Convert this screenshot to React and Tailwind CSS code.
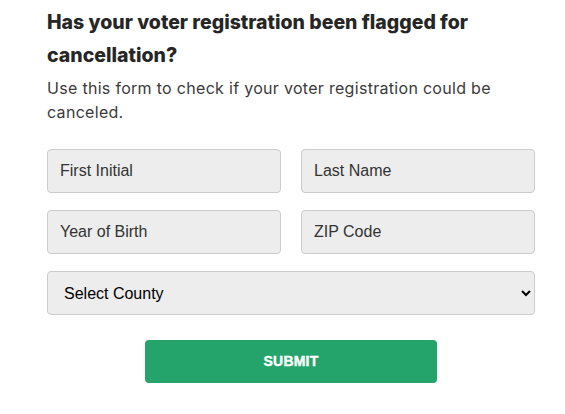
import React from 'react';

const fieldClass =
  'w-full h-[44px] px-3 bg-[#ededed] border border-[#cccccc] rounded-[4px] text-[16px] text-[#333] placeholder-[#333] outline-none';

const App = () => {
  return (
    <div className="min-h-screen bg-white" style={{ fontFamily: 'Inter, "Liberation Sans", sans-serif' }}>
      <div className="w-[488px] ml-[47px] pt-[6px]">
        {/* Heading */}
        <h2 className="text-[19.5px] leading-[33px] font-extrabold text-[#262626]">
          Has your voter registration been flagged for cancellation?
        </h2>
        <p className="mt-[4px] text-[16px] leading-[24px] text-[#3a3a3a] tracking-[0.3px]">
          Use this form to check if your voter registration could be canceled.
        </p>

        {/* Form */}
        <form className="mt-[25px]" onSubmit={(e) => e.preventDefault()}>
          <div className="grid grid-cols-2 gap-x-[20px] gap-y-[17px] [font-family:'Liberation_Sans',Arial,sans-serif]">
            <input className={fieldClass} placeholder="First Initial" />
            <input className={fieldClass} placeholder="Last Name" />
            <input className={fieldClass} placeholder="Year of Birth" />
            <input className={fieldClass} placeholder="ZIP Code" />
            <select className={`${fieldClass} col-span-2 text-black`} defaultValue="">
              <option value="">Select County</option>
            </select>
          </div>

          <div className="flex justify-center mt-[25px]">
            <button
              type="submit"
              className="w-[292px] h-[43px] bg-[#24a36b] rounded-[4px] text-white text-[14px] font-black tracking-[0.2px] [-webkit-text-stroke:0.4px_white] [font-family:'Liberation_Sans',Arial,sans-serif]"
            >
              SUBMIT
            </button>
          </div>
        </form>
      </div>
    </div>
  );
};

export default App;
